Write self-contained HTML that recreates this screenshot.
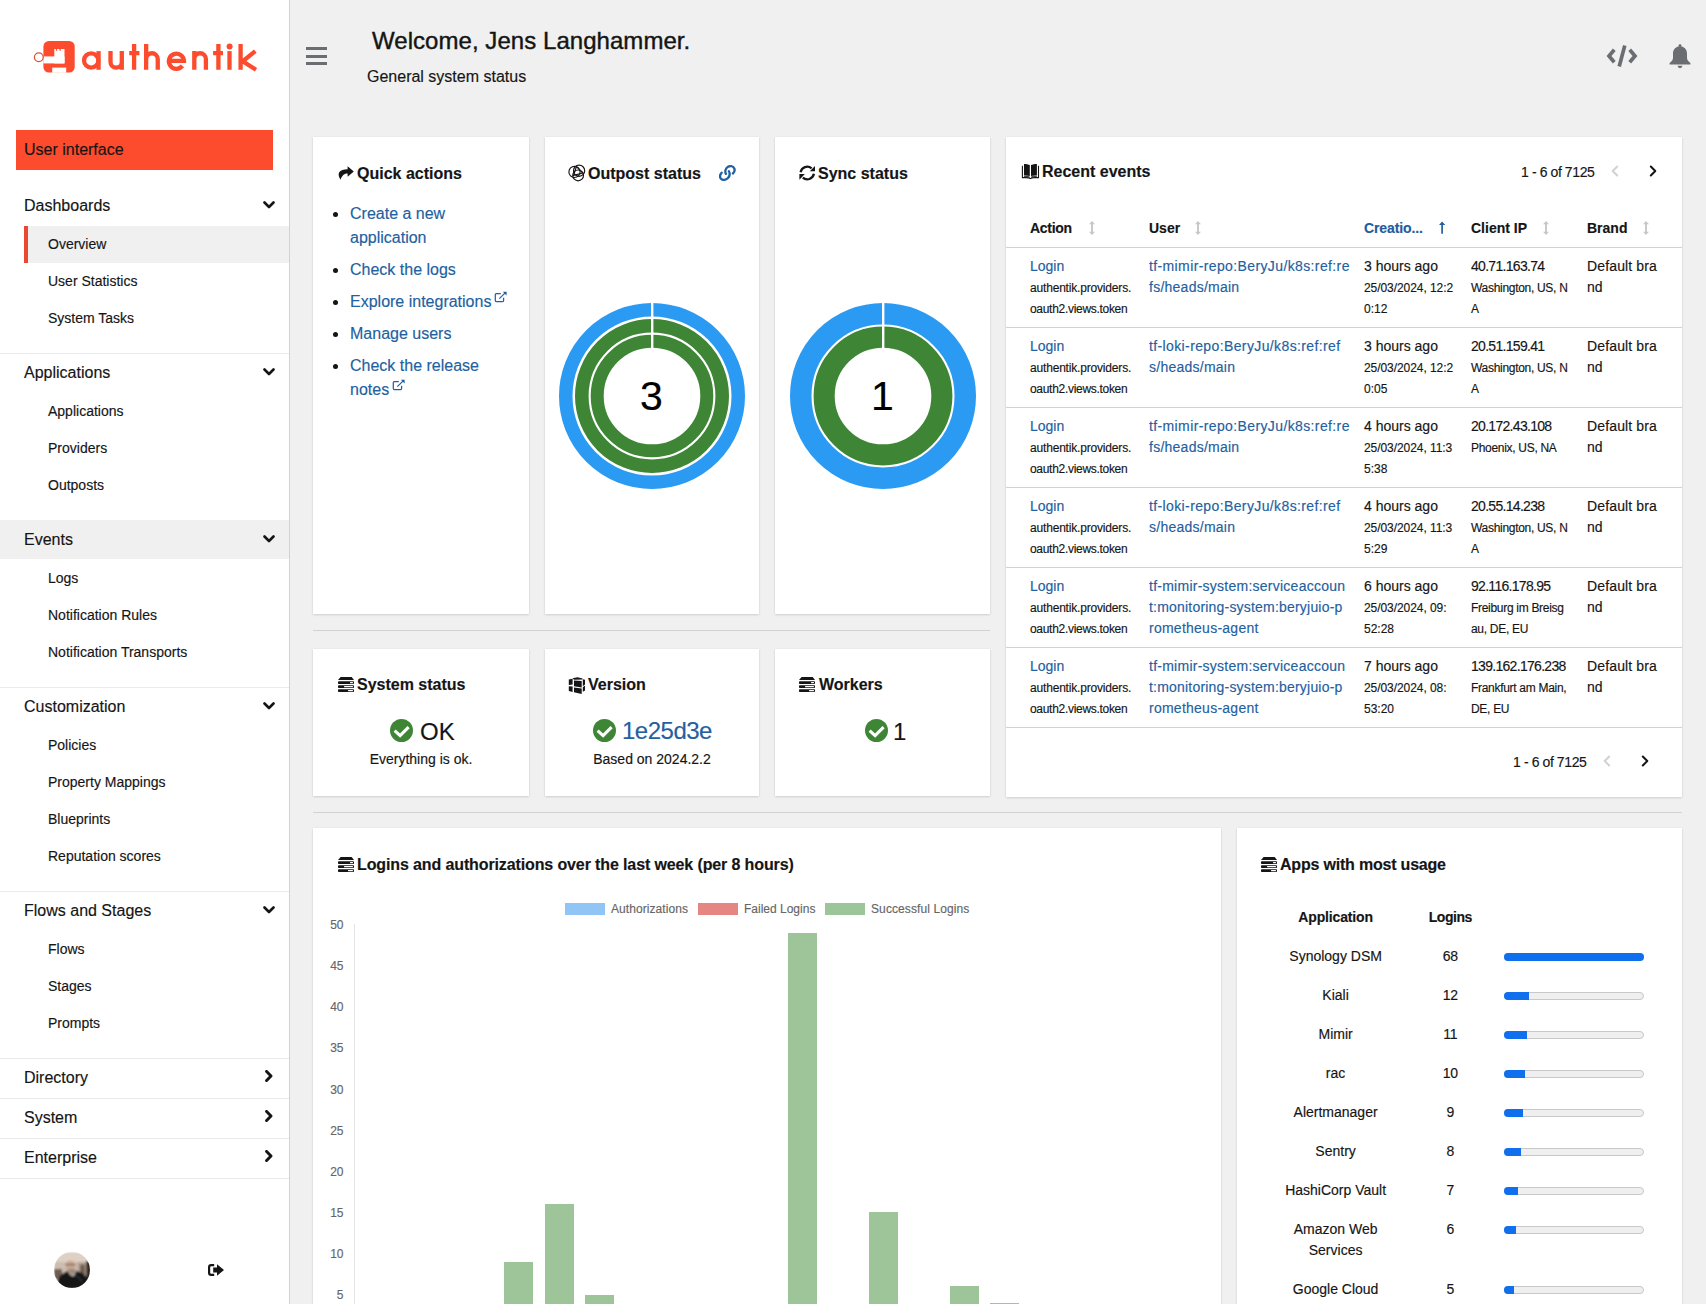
<!DOCTYPE html>
<html><head><meta charset="utf-8"><title>authentik</title>
<style>
html,body{margin:0;padding:0;}
body{width:1706px;height:1304px;overflow:hidden;position:relative;background:#f0f0f0;font-family:"Liberation Sans",sans-serif;}
.t{position:absolute;white-space:nowrap;line-height:1;-webkit-text-stroke:0.15px currentColor;}
.card{position:absolute;background:#fff;box-shadow:0 1px 2px 0 rgba(3,3,3,.12),0 0 2px 0 rgba(3,3,3,.06);}
</style></head><body>

<div style="position:absolute;left:0px;top:0px;width:289px;height:1304px;background:#fff"></div>
<div style="position:absolute;left:289px;top:0px;width:1px;height:1304px;background:#d2d2d2"></div>
<svg style="position:absolute;left:30px;top:36px" width="232" height="42" viewBox="0 0 232 42">
<rect x="13.4" y="4.9" width="31.3" height="31.7" rx="5.5" fill="#fd4b2d"/>
<g fill="#fff">
<rect x="24.3" y="13" width="10.2" height="14.4"/>
<rect x="13.4" y="20.4" width="21.1" height="7"/>
<rect x="22.2" y="31.6" width="14" height="5.2"/>
</g>
<g fill="#fd4b2d"><rect x="25.9" y="12.5" width="1.2" height="2.2"/><rect x="29.4" y="12.5" width="1.4" height="2.2"/></g>
<circle cx="8.8" cy="21.3" r="4.4" fill="#fff" stroke="#e0503a" stroke-width="1.3"/>
<g fill="none" stroke="#fd4b2d" stroke-width="4.3">
<circle cx="61.2" cy="24.45" r="7.15"/>
<path d="M68.55 15.1V33.8"/>
<path d="M80.5 15.1V26a5.65 5.65 0 0 0 11.3 0V15.1M91.8 15.1V33.8"/>
<path d="M104.1 8.1V33.8M99.2 17.2h10.2"/>
<path d="M116.15 8.1V33.8M116.15 33.8V23.05a5.8 5.8 0 0 1 11.6 0V33.8"/>
<path d="M138.85 24.8H154a7.55 7.55 0 1 0 -1.6 5.1"/>
<path d="M164.3 15.1V33.8M164.3 33.8V23.05a5.8 5.8 0 0 1 11.6 0V33.8"/>
<path d="M188.4 8.1V33.8M183.1 17.2h9.9"/>
<path d="M199.5 15.1V33.8"/>
<path d="M210.6 8.1V33.8M225.3 15.1L212.7 25.3L226 33.8"/>
</g>
<circle cx="199.6" cy="10.5" r="3" fill="#fd4b2d"/>
</svg>
<div style="position:absolute;left:16px;top:130px;width:257px;height:40px;background:#fd4b2d"></div>
<div class="t" style="left:24px;top:141px;line-height:17px;font-size:16px;color:#151515;font-weight:400;">User interface</div>
<div style="position:absolute;left:24px;top:226px;width:265px;height:37px;background:#f0f0f0"></div>
<div style="position:absolute;left:24px;top:226px;width:4px;height:37px;background:#e8492f"></div>
<div style="position:absolute;left:0px;top:520px;width:289px;height:39px;background:#f0f0f0"></div>
<div style="position:absolute;left:0px;top:353px;width:289px;height:1px;background:#ebebeb"></div>
<div style="position:absolute;left:0px;top:687px;width:289px;height:1px;background:#ebebeb"></div>
<div style="position:absolute;left:0px;top:891px;width:289px;height:1px;background:#ebebeb"></div>
<div style="position:absolute;left:0px;top:1058px;width:289px;height:1px;background:#ebebeb"></div>
<div style="position:absolute;left:0px;top:1098px;width:289px;height:1px;background:#ebebeb"></div>
<div style="position:absolute;left:0px;top:1138px;width:289px;height:1px;background:#ebebeb"></div>
<div style="position:absolute;left:0px;top:1178px;width:289px;height:1px;background:#ebebeb"></div>
<div class="t" style="left:24px;top:197px;line-height:17px;font-size:16px;color:#151515;font-weight:400;">Dashboards</div>
<svg style="position:absolute;left:262.5px;top:200px" width="12" height="10" viewBox="0 0 12 10"><path d="M1.5 2.5L6 7l4.5-4.5" fill="none" stroke="#151515" stroke-width="2.6" stroke-linecap="round" stroke-linejoin="round"/></svg>
<div class="t" style="left:48px;top:236px;line-height:16px;font-size:14px;color:#151515;font-weight:400;">Overview</div>
<div class="t" style="left:48px;top:273px;line-height:16px;font-size:14px;color:#151515;font-weight:400;">User Statistics</div>
<div class="t" style="left:48px;top:310px;line-height:16px;font-size:14px;color:#151515;font-weight:400;">System Tasks</div>
<div class="t" style="left:24px;top:364px;line-height:17px;font-size:16px;color:#151515;font-weight:400;">Applications</div>
<svg style="position:absolute;left:262.5px;top:367px" width="12" height="10" viewBox="0 0 12 10"><path d="M1.5 2.5L6 7l4.5-4.5" fill="none" stroke="#151515" stroke-width="2.6" stroke-linecap="round" stroke-linejoin="round"/></svg>
<div class="t" style="left:48px;top:403px;line-height:16px;font-size:14px;color:#151515;font-weight:400;">Applications</div>
<div class="t" style="left:48px;top:440px;line-height:16px;font-size:14px;color:#151515;font-weight:400;">Providers</div>
<div class="t" style="left:48px;top:477px;line-height:16px;font-size:14px;color:#151515;font-weight:400;">Outposts</div>
<div class="t" style="left:24px;top:531px;line-height:17px;font-size:16px;color:#151515;font-weight:400;">Events</div>
<svg style="position:absolute;left:262.5px;top:534px" width="12" height="10" viewBox="0 0 12 10"><path d="M1.5 2.5L6 7l4.5-4.5" fill="none" stroke="#151515" stroke-width="2.6" stroke-linecap="round" stroke-linejoin="round"/></svg>
<div class="t" style="left:48px;top:570px;line-height:16px;font-size:14px;color:#151515;font-weight:400;">Logs</div>
<div class="t" style="left:48px;top:607px;line-height:16px;font-size:14px;color:#151515;font-weight:400;">Notification Rules</div>
<div class="t" style="left:48px;top:644px;line-height:16px;font-size:14px;color:#151515;font-weight:400;">Notification Transports</div>
<div class="t" style="left:24px;top:698px;line-height:17px;font-size:16px;color:#151515;font-weight:400;">Customization</div>
<svg style="position:absolute;left:262.5px;top:701px" width="12" height="10" viewBox="0 0 12 10"><path d="M1.5 2.5L6 7l4.5-4.5" fill="none" stroke="#151515" stroke-width="2.6" stroke-linecap="round" stroke-linejoin="round"/></svg>
<div class="t" style="left:48px;top:737px;line-height:16px;font-size:14px;color:#151515;font-weight:400;">Policies</div>
<div class="t" style="left:48px;top:774px;line-height:16px;font-size:14px;color:#151515;font-weight:400;">Property Mappings</div>
<div class="t" style="left:48px;top:811px;line-height:16px;font-size:14px;color:#151515;font-weight:400;">Blueprints</div>
<div class="t" style="left:48px;top:848px;line-height:16px;font-size:14px;color:#151515;font-weight:400;">Reputation scores</div>
<div class="t" style="left:24px;top:902px;line-height:17px;font-size:16px;color:#151515;font-weight:400;">Flows and Stages</div>
<svg style="position:absolute;left:262.5px;top:905px" width="12" height="10" viewBox="0 0 12 10"><path d="M1.5 2.5L6 7l4.5-4.5" fill="none" stroke="#151515" stroke-width="2.6" stroke-linecap="round" stroke-linejoin="round"/></svg>
<div class="t" style="left:48px;top:941px;line-height:16px;font-size:14px;color:#151515;font-weight:400;">Flows</div>
<div class="t" style="left:48px;top:978px;line-height:16px;font-size:14px;color:#151515;font-weight:400;">Stages</div>
<div class="t" style="left:48px;top:1015px;line-height:16px;font-size:14px;color:#151515;font-weight:400;">Prompts</div>
<div class="t" style="left:24px;top:1069px;line-height:17px;font-size:16px;color:#151515;font-weight:400;">Directory</div>
<svg style="position:absolute;left:264px;top:1070px" width="10" height="12" viewBox="0 0 10 12"><path d="M2.6 1.4L7 6l-4.4 4.6" fill="none" stroke="#151515" stroke-width="2.9" stroke-linecap="round" stroke-linejoin="round"/></svg>
<div class="t" style="left:24px;top:1109px;line-height:17px;font-size:16px;color:#151515;font-weight:400;">System</div>
<svg style="position:absolute;left:264px;top:1110px" width="10" height="12" viewBox="0 0 10 12"><path d="M2.6 1.4L7 6l-4.4 4.6" fill="none" stroke="#151515" stroke-width="2.9" stroke-linecap="round" stroke-linejoin="round"/></svg>
<div class="t" style="left:24px;top:1149px;line-height:17px;font-size:16px;color:#151515;font-weight:400;">Enterprise</div>
<svg style="position:absolute;left:264px;top:1150px" width="10" height="12" viewBox="0 0 10 12"><path d="M2.6 1.4L7 6l-4.4 4.6" fill="none" stroke="#151515" stroke-width="2.9" stroke-linecap="round" stroke-linejoin="round"/></svg>
<svg style="position:absolute;left:54px;top:1252px" width="36" height="36" viewBox="0 0 36 36">
<defs><clipPath id="av"><circle cx="18" cy="18" r="18"/></clipPath><filter id="avb" x="-10%" y="-10%" width="120%" height="120%"><feGaussianBlur stdDeviation="1.1"/></filter></defs>
<g clip-path="url(#av)"><g filter="url(#avb)">
<rect width="36" height="36" fill="#cdbdb0"/>
<rect x="0" y="0" width="36" height="10" fill="#ddd0c4"/>
<rect x="23.5" y="10" width="9" height="17" fill="#b8a698"/>
<rect x="26" y="12.5" width="5" height="13" fill="#6f5d50"/>
<rect x="32" y="9" width="5" height="20" fill="#352a23"/>
<rect x="0" y="17" width="8" height="10" fill="#6d5d52"/>
<ellipse cx="16.4" cy="13" rx="5" ry="6.4" fill="#c9a792"/>
<path d="M11.2 11.5q0-6 5.2-6.3q5.2.3 5.2 6.3q-2-3-5.2-3t-5.2 3z" fill="#e0d0c0"/>
<path d="M11.5 12.6h9.8" stroke="#4d3c30" stroke-width="1"/>
<path d="M13.5 17q3 6 6 6q1.6-2.5 2-6z" fill="#9a8a7e"/>
<path d="M2 37q0.5-11 6-15q3-2 5.5-3.2q3 5.8 6.5 5.5q1.6-3.2 2-5.5q5 1 8.5 4q4 4 5 14z" fill="#121212"/>
<path d="M22 24q3 1 6 6" stroke="#2a3a48" stroke-width="1.2" fill="none"/>
</g></g></svg>
<svg style="position:absolute;left:208px;top:1264px" width="17" height="13" viewBox="0 0 17 13"><path d="M9 0.2L16 6L9 11.8V8.4H5.2V3.6H9Z" fill="#151515"/><path d="M6.2 1.1H3.2Q1.1 1.1 1.1 3.2V8.8Q1.1 10.9 3.2 10.9H6.2" fill="none" stroke="#151515" stroke-width="2.2"/></svg>
<div style="position:absolute;left:306px;top:47px;width:21px;height:3px;background:#6a6e73"></div>
<div style="position:absolute;left:306px;top:54.5px;width:21px;height:3px;background:#6a6e73"></div>
<div style="position:absolute;left:306px;top:62px;width:21px;height:3px;background:#6a6e73"></div>
<div class="t" style="left:372px;top:27px;line-height:27px;font-size:24px;color:#151515;font-weight:400;-webkit-text-stroke:0.4px #151515;letter-spacing:0.05px">Welcome, Jens Langhammer.</div>
<div class="t" style="left:367px;top:68px;line-height:17px;font-size:16px;color:#151515;font-weight:400;">General system status</div>
<svg style="position:absolute;left:1605px;top:43px" width="34" height="26" viewBox="0 0 34 26"><g fill="none" stroke="#6a6e73" stroke-width="3.7" stroke-linecap="butt">
<path d="M9.3 6.8L4 13l5.3 6.2"/><path d="M24.7 6.8L30 13l-5.3 6.2"/><path d="M19.8 2.5L14.2 23.5"/></g></svg>
<svg style="position:absolute;left:1668px;top:43px" width="24" height="26" viewBox="0 0 24 26"><path d="M12 1.2c1 0 1.4.6 1.4 1.4v.8c3.6.7 5.6 3.4 5.6 7.2v4.4c0 1.7 1.2 3.3 3.4 5v1.4H1.6V20c2.2-1.7 3.4-3.3 3.4-5v-4.4c0-3.8 2-6.5 5.6-7.2v-.8c0-.8.4-1.4 1.4-1.4z" fill="#6a6e73"/><path d="M9.5 22.8h5q-.5 2.4-2.5 2.4t-2.5-2.4z" fill="#6a6e73"/></svg>
<div class="card" style="left:313px;top:137px;width:216px;height:477px"></div>
<div class="card" style="left:545px;top:137px;width:214px;height:477px"></div>
<div class="card" style="left:775px;top:137px;width:215px;height:477px"></div>
<div class="card" style="left:1006px;top:137px;width:676px;height:660px"></div>
<div style="position:absolute;left:313px;top:630px;width:677px;height:1px;background:#d2d2d2"></div>
<div class="card" style="left:313px;top:649px;width:216px;height:147px"></div>
<div class="card" style="left:545px;top:649px;width:214px;height:147px"></div>
<div class="card" style="left:775px;top:649px;width:215px;height:147px"></div>
<div style="position:absolute;left:313px;top:812px;width:1369px;height:1px;background:#d2d2d2"></div>
<div class="card" style="left:313px;top:828px;width:908px;height:520px"></div>
<div class="card" style="left:1237px;top:828px;width:445px;height:520px"></div>
<svg style="position:absolute;left:338px;top:165px" width="17" height="16" viewBox="0 0 17 16"><path d="M9.6 1.2L15.8 6.5L9.6 11.8V8.6C6.5 8.6 4.2 10 2.6 14.8C0.8 12 0 9.5 1.2 7.3C2.5 5 5.5 4.2 9.6 4.2Z" fill="#151515"/></svg>
<div class="t" style="left:357px;top:165px;line-height:17px;font-size:16px;color:#151515;font-weight:700;">Quick actions</div>
<div class="t" style="left:350px;top:205px;line-height:17px;font-size:16px;color:#2360a0;font-weight:400;">Create a new</div>
<div class="t" style="left:350px;top:229px;line-height:17px;font-size:16px;color:#2360a0;font-weight:400;">application</div>
<div class="t" style="left:350px;top:261px;line-height:17px;font-size:16px;color:#2360a0;font-weight:400;">Check the logs</div>
<div class="t" style="left:350px;top:293px;line-height:17px;font-size:16px;color:#2360a0;font-weight:400;">Explore integrations</div>
<div class="t" style="left:350px;top:325px;line-height:17px;font-size:16px;color:#2360a0;font-weight:400;">Manage users</div>
<div class="t" style="left:350px;top:357px;line-height:17px;font-size:16px;color:#2360a0;font-weight:400;">Check the release</div>
<div class="t" style="left:350px;top:381px;line-height:17px;font-size:16px;color:#2360a0;font-weight:400;">notes</div>
<div style="position:absolute;left:333px;top:212px;width:5px;height:5px;background:#151515;border-radius:50%"></div>
<div style="position:absolute;left:333px;top:268px;width:5px;height:5px;background:#151515;border-radius:50%"></div>
<div style="position:absolute;left:333px;top:300px;width:5px;height:5px;background:#151515;border-radius:50%"></div>
<div style="position:absolute;left:333px;top:332px;width:5px;height:5px;background:#151515;border-radius:50%"></div>
<div style="position:absolute;left:333px;top:364px;width:5px;height:5px;background:#151515;border-radius:50%"></div>
<svg style="position:absolute;left:494px;top:291px" width="14" height="13" viewBox="0 0 14 13"><g fill="none" stroke="#2360a0" stroke-width="1.25"><path d="M6.8 2.6H2.3Q1.3 2.6 1.3 3.6V9.6Q1.3 10.6 2.3 10.6H8.6Q9.6 10.6 9.6 9.6V6.8"/><path d="M5.3 7.6L11.2 1.9"/></g><path d="M8.8 0.7H12.6V4.5Z" fill="#2360a0"/></svg>
<svg style="position:absolute;left:392px;top:379px" width="14" height="13" viewBox="0 0 14 13"><g fill="none" stroke="#2360a0" stroke-width="1.25"><path d="M6.8 2.6H2.3Q1.3 2.6 1.3 3.6V9.6Q1.3 10.6 2.3 10.6H8.6Q9.6 10.6 9.6 9.6V6.8"/><path d="M5.3 7.6L11.2 1.9"/></g><path d="M8.8 0.7H12.6V4.5Z" fill="#2360a0"/></svg>
<svg style="position:absolute;left:568px;top:164px" width="18" height="18" viewBox="0 0 18 18"><g fill="none" stroke="#151515" stroke-width="1.15"><circle cx="11.1" cy="6.7" r="5.6"/><circle cx="6.5" cy="7.9" r="5.6"/><circle cx="10.1" cy="11.4" r="5.4"/>
<path d="M8.4 2.6L15 9L5.6 11.4Z"/></g></svg>
<div class="t" style="left:588px;top:165px;line-height:17px;font-size:16px;color:#151515;font-weight:700;">Outpost status</div>
<svg style="position:absolute;left:719px;top:165px" width="17" height="17" viewBox="0 0 17 17"><g fill="none" stroke="#2360a0" stroke-width="2.3" stroke-linecap="round"><path d="M6.9 8.9C5.6 6.6 6.5 3.3 9 1.8C11.5 0.4 14.3 1.2 15.3 3.5C16 5.4 15.2 7.4 13.9 8.5"/><path d="M2.6 7.7C1 9.5 0.6 12 2 13.8C3.6 15.6 6.9 15.3 9 13C10.8 11 10.9 8.1 9.9 6.3"/></g></svg>
<svg style="position:absolute;left:552px;top:296px" width="200" height="200" viewBox="0 0 200 200"><circle cx="100" cy="100" r="86.25" fill="none" stroke="#2b9af3" stroke-width="13.5"/><circle cx="100" cy="100" r="70.2" fill="none" stroke="#3e8635" stroke-width="13.600000000000001"/><circle cx="100" cy="100" r="54.8" fill="none" stroke="#3e8635" stroke-width="13.0"/><rect x="99" y="0" width="2.4" height="60" fill="#fff"/></svg>
<div class="t" style="left:351.5px;width:600px;text-align:center;top:373px;line-height:46px;font-size:41px;color:#000;font-weight:400;">3</div>
<svg style="position:absolute;left:799px;top:165px" width="17" height="17" viewBox="0 0 17 17"><g fill="none" stroke="#151515" stroke-width="2.3"><path d="M1.6 7.2A6.7 6.7 0 0 1 12.6 3.4"/><path d="M14.9 8.8A6.7 6.7 0 0 1 3.8 12.6"/></g>
<path d="M10.8 6.3H16V1z" fill="#151515"/><path d="M0.4 9H5.8L0.4 14.8z" fill="#151515"/></svg>
<div class="t" style="left:818px;top:165px;line-height:17px;font-size:16px;color:#151515;font-weight:700;">Sync status</div>
<svg style="position:absolute;left:783px;top:296px" width="200" height="200" viewBox="0 0 200 200"><circle cx="100" cy="100" r="82.25" fill="none" stroke="#2b9af3" stroke-width="21.5"/><circle cx="100" cy="100" r="58.85" fill="none" stroke="#3e8635" stroke-width="21.10000000000001"/><rect x="99" y="0" width="2.4" height="60" fill="#fff"/></svg>
<div class="t" style="left:582.5px;width:600px;text-align:center;top:373px;line-height:46px;font-size:41px;color:#000;font-weight:400;">1</div>
<svg style="position:absolute;left:338px;top:677px" width="16" height="16" viewBox="0 0 16 16"><g fill="#151515">
<path d="M2.6 0H13.7L16 3H0Z"/><rect x="0" y="4.2" width="16" height="2.9" rx=".8"/><rect x="0" y="8.2" width="16" height="2.9" rx=".8"/><rect x="0" y="12.2" width="16" height="2.9" rx=".8"/></g>
<g fill="#fff"><rect x="12" y="5.1" width="3" height="1.1" rx=".5"/><rect x="6" y="9.1" width="9" height="1.1" rx=".5"/><rect x="10" y="13.1" width="5" height="1.1" rx=".5"/></g></svg>
<div class="t" style="left:357px;top:676px;line-height:17px;font-size:16px;color:#151515;font-weight:700;">System status</div>
<svg style="position:absolute;left:389.9px;top:718.8px" width="23" height="23" viewBox="0 0 23 23"><circle cx="11.5" cy="11.5" r="11.5" fill="#3e8635"/><path d="M4.6 11.6L10.1 16.6L18.6 8.1" fill="none" stroke="#fff" stroke-width="3.1"/></svg>
<div class="t" style="left:420px;top:718px;line-height:27px;font-size:24px;color:#151515;font-weight:400;">OK</div>
<div class="t" style="left:121px;width:600px;text-align:center;top:751px;line-height:16px;font-size:14px;color:#151515;font-weight:400;">Everything is ok.</div>
<svg style="position:absolute;left:568px;top:677px" width="18" height="17" viewBox="0 0 18 17"><g fill="#151515">
<path d="M0.8 2.5L4.6 1.7V7.5L0.8 8Z"/><path d="M0.8 9.2L4.6 9.6V15L0.8 14Z"/>
<path d="M6 3.6L13.7 4.1V10.4L6 9.3Z"/><path d="M6 10.6L13.7 11.6V17L6 15.2Z"/>
<path d="M14.8 2.2L17 2.7V7.5L14.8 9.2Z"/><path d="M14.8 10.2L17 8.5V13.5L14.8 14.8Z"/>
<path d="M4.6 1.2L9.5 0.3L14.5 1.5L14.5 2.5L6 2.7Z"/></g></svg>
<div class="t" style="left:588px;top:676px;line-height:17px;font-size:16px;color:#151515;font-weight:700;">Version</div>
<svg style="position:absolute;left:593.0px;top:718.8px" width="23" height="23" viewBox="0 0 23 23"><circle cx="11.5" cy="11.5" r="11.5" fill="#3e8635"/><path d="M4.6 11.6L10.1 16.6L18.6 8.1" fill="none" stroke="#fff" stroke-width="3.1"/></svg>
<div class="t" style="left:622px;top:717px;line-height:27px;font-size:24px;color:#2360a0;font-weight:400;letter-spacing:-0.5px">1e25d3e</div>
<div class="t" style="left:352px;width:600px;text-align:center;top:751px;line-height:16px;font-size:14px;color:#151515;font-weight:400;">Based on 2024.2.2</div>
<svg style="position:absolute;left:799px;top:677px" width="16" height="16" viewBox="0 0 16 16"><g fill="#151515">
<path d="M2.6 0H13.7L16 3H0Z"/><rect x="0" y="4.2" width="16" height="2.9" rx=".8"/><rect x="0" y="8.2" width="16" height="2.9" rx=".8"/><rect x="0" y="12.2" width="16" height="2.9" rx=".8"/></g>
<g fill="#fff"><rect x="12" y="5.1" width="3" height="1.1" rx=".5"/><rect x="6" y="9.1" width="9" height="1.1" rx=".5"/><rect x="10" y="13.1" width="5" height="1.1" rx=".5"/></g></svg>
<div class="t" style="left:819px;top:676px;line-height:17px;font-size:16px;color:#151515;font-weight:700;">Workers</div>
<svg style="position:absolute;left:864.8px;top:718.8px" width="23" height="23" viewBox="0 0 23 23"><circle cx="11.5" cy="11.5" r="11.5" fill="#3e8635"/><path d="M4.6 11.6L10.1 16.6L18.6 8.1" fill="none" stroke="#fff" stroke-width="3.1"/></svg>
<div class="t" style="left:893px;top:718px;line-height:27px;font-size:24px;color:#151515;font-weight:400;">1</div>
<svg style="position:absolute;left:1021px;top:164px" width="19" height="16" viewBox="0 0 19 16"><g fill="#151515"><path d="M3 -0.5L8.8 1V12L3 11.2Z"/><path d="M10 1L15.9 -0.5V11.2L10 12Z"/></g>
<path d="M1.4 1.8V13.6H5.5Q8 13.6 9.4 14.6Q10.8 13.6 13.3 13.6H17.5V1.8" fill="none" stroke="#151515" stroke-width="1.1"/>
<path d="M3 12.2Q6.5 12 8.8 13.2M10 13.2Q12.3 12 15.9 12.2" fill="none" stroke="#151515" stroke-width="1"/></svg>
<div class="t" style="left:1042px;top:163px;line-height:17px;font-size:16px;color:#151515;font-weight:700;">Recent events</div>
<div class="t" style="left:1521px;top:164px;line-height:16px;font-size:14px;color:#151515;font-weight:400;letter-spacing:-0.4px">1 - 6 of 7125</div>
<svg style="position:absolute;left:1610px;top:165px" width="9" height="12" viewBox="0 0 9 12"><path d="M7.2 1.5L2.7 6l4.5 4.5" fill="none" stroke="#d2d2d2" stroke-width="2" stroke-linecap="round" stroke-linejoin="round"/></svg>
<svg style="position:absolute;left:1649px;top:165px" width="9" height="12" viewBox="0 0 9 12"><path d="M1.8 1.5L6.3 6l-4.5 4.5" fill="none" stroke="#151515" stroke-width="2" stroke-linecap="round" stroke-linejoin="round"/></svg>
<div class="t" style="left:1030px;top:220px;line-height:16px;font-size:14px;color:#151515;font-weight:700;letter-spacing:-0.3px">Action</div>
<svg style="position:absolute;left:1088px;top:221px" width="8" height="15" viewBox="0 0 8 15"><path d="M4 0L7 3.3H4.95V10.7H7L4 14L1 10.7H3.05V3.3H1z" fill="#c7c7c7"/></svg>
<div class="t" style="left:1149px;top:220px;line-height:16px;font-size:14px;color:#151515;font-weight:700;">User</div>
<svg style="position:absolute;left:1194px;top:221px" width="8" height="15" viewBox="0 0 8 15"><path d="M4 0L7 3.3H4.95V10.7H7L4 14L1 10.7H3.05V3.3H1z" fill="#c7c7c7"/></svg>
<div class="t" style="left:1364px;top:220px;line-height:16px;font-size:14px;color:#1f5c9e;font-weight:700;letter-spacing:-0.1px">Creatio...</div>
<svg style="position:absolute;left:1439px;top:221px" width="8" height="14" viewBox="0 0 8 14"><path d="M3.1 0.6L6.3 4.1H3.95V12.8H2.25V4.1H-0.1z" fill="#2360a0"/></svg>
<div class="t" style="left:1471px;top:220px;line-height:16px;font-size:14px;color:#151515;font-weight:700;">Client IP</div>
<svg style="position:absolute;left:1542px;top:221px" width="8" height="15" viewBox="0 0 8 15"><path d="M4 0L7 3.3H4.95V10.7H7L4 14L1 10.7H3.05V3.3H1z" fill="#c7c7c7"/></svg>
<div class="t" style="left:1587px;top:220px;line-height:16px;font-size:14px;color:#151515;font-weight:700;">Brand</div>
<svg style="position:absolute;left:1642px;top:221px" width="8" height="15" viewBox="0 0 8 15"><path d="M4 0L7 3.3H4.95V10.7H7L4 14L1 10.7H3.05V3.3H1z" fill="#c7c7c7"/></svg>
<div style="position:absolute;left:1006px;top:247px;width:676px;height:1px;background:#d2d2d2"></div>
<div class="t" style="left:1030px;top:258px;line-height:16px;font-size:14px;color:#2360a0;font-weight:400;">Login</div>
<div class="t" style="left:1030px;top:281px;line-height:14px;font-size:12px;color:#151515;font-weight:400;letter-spacing:-0.18px">authentik.providers.</div>
<div class="t" style="left:1030px;top:302px;line-height:14px;font-size:12px;color:#151515;font-weight:400;letter-spacing:-0.3px">oauth2.views.token</div>
<div class="t" style="left:1149px;top:258px;line-height:16px;font-size:14px;color:#2360a0;font-weight:400;letter-spacing:0.38px">tf-mimir-repo:BeryJu/k8s:ref:re</div>
<div class="t" style="left:1149px;top:279px;line-height:16px;font-size:14px;color:#2360a0;font-weight:400;letter-spacing:0.25px">fs/heads/main</div>
<div class="t" style="left:1364px;top:258px;line-height:16px;font-size:14px;color:#151515;font-weight:400;">3 hours ago</div>
<div class="t" style="left:1364px;top:281px;line-height:14px;font-size:12px;color:#151515;font-weight:400;letter-spacing:-0.06px">25/03/2024, 12:2</div>
<div class="t" style="left:1364px;top:302px;line-height:14px;font-size:12px;color:#151515;font-weight:400;">0:12</div>
<div class="t" style="left:1471px;top:258px;line-height:16px;font-size:14px;color:#151515;font-weight:400;letter-spacing:-0.7px">40.71.163.74</div>
<div class="t" style="left:1471px;top:281px;line-height:14px;font-size:12px;color:#151515;font-weight:400;letter-spacing:-0.3px">Washington, US, N</div>
<div class="t" style="left:1471px;top:302px;line-height:14px;font-size:12px;color:#151515;font-weight:400;letter-spacing:-0.3px">A</div>
<div class="t" style="left:1587px;top:258px;line-height:16px;font-size:14px;color:#151515;font-weight:400;letter-spacing:0.14px">Default bra</div>
<div class="t" style="left:1587px;top:279px;line-height:16px;font-size:14px;color:#151515;font-weight:400;">nd</div>
<div style="position:absolute;left:1006px;top:327px;width:676px;height:1px;background:#d2d2d2"></div>
<div class="t" style="left:1030px;top:338px;line-height:16px;font-size:14px;color:#2360a0;font-weight:400;">Login</div>
<div class="t" style="left:1030px;top:361px;line-height:14px;font-size:12px;color:#151515;font-weight:400;letter-spacing:-0.18px">authentik.providers.</div>
<div class="t" style="left:1030px;top:382px;line-height:14px;font-size:12px;color:#151515;font-weight:400;letter-spacing:-0.3px">oauth2.views.token</div>
<div class="t" style="left:1149px;top:338px;line-height:16px;font-size:14px;color:#2360a0;font-weight:400;letter-spacing:0.38px">tf-loki-repo:BeryJu/k8s:ref:ref</div>
<div class="t" style="left:1149px;top:359px;line-height:16px;font-size:14px;color:#2360a0;font-weight:400;letter-spacing:0.25px">s/heads/main</div>
<div class="t" style="left:1364px;top:338px;line-height:16px;font-size:14px;color:#151515;font-weight:400;">3 hours ago</div>
<div class="t" style="left:1364px;top:361px;line-height:14px;font-size:12px;color:#151515;font-weight:400;letter-spacing:-0.06px">25/03/2024, 12:2</div>
<div class="t" style="left:1364px;top:382px;line-height:14px;font-size:12px;color:#151515;font-weight:400;">0:05</div>
<div class="t" style="left:1471px;top:338px;line-height:16px;font-size:14px;color:#151515;font-weight:400;letter-spacing:-0.7px">20.51.159.41</div>
<div class="t" style="left:1471px;top:361px;line-height:14px;font-size:12px;color:#151515;font-weight:400;letter-spacing:-0.3px">Washington, US, N</div>
<div class="t" style="left:1471px;top:382px;line-height:14px;font-size:12px;color:#151515;font-weight:400;letter-spacing:-0.3px">A</div>
<div class="t" style="left:1587px;top:338px;line-height:16px;font-size:14px;color:#151515;font-weight:400;letter-spacing:0.14px">Default bra</div>
<div class="t" style="left:1587px;top:359px;line-height:16px;font-size:14px;color:#151515;font-weight:400;">nd</div>
<div style="position:absolute;left:1006px;top:407px;width:676px;height:1px;background:#d2d2d2"></div>
<div class="t" style="left:1030px;top:418px;line-height:16px;font-size:14px;color:#2360a0;font-weight:400;">Login</div>
<div class="t" style="left:1030px;top:441px;line-height:14px;font-size:12px;color:#151515;font-weight:400;letter-spacing:-0.18px">authentik.providers.</div>
<div class="t" style="left:1030px;top:462px;line-height:14px;font-size:12px;color:#151515;font-weight:400;letter-spacing:-0.3px">oauth2.views.token</div>
<div class="t" style="left:1149px;top:418px;line-height:16px;font-size:14px;color:#2360a0;font-weight:400;letter-spacing:0.38px">tf-mimir-repo:BeryJu/k8s:ref:re</div>
<div class="t" style="left:1149px;top:439px;line-height:16px;font-size:14px;color:#2360a0;font-weight:400;letter-spacing:0.25px">fs/heads/main</div>
<div class="t" style="left:1364px;top:418px;line-height:16px;font-size:14px;color:#151515;font-weight:400;">4 hours ago</div>
<div class="t" style="left:1364px;top:441px;line-height:14px;font-size:12px;color:#151515;font-weight:400;letter-spacing:-0.06px">25/03/2024, 11:3</div>
<div class="t" style="left:1364px;top:462px;line-height:14px;font-size:12px;color:#151515;font-weight:400;">5:38</div>
<div class="t" style="left:1471px;top:418px;line-height:16px;font-size:14px;color:#151515;font-weight:400;letter-spacing:-0.7px">20.172.43.108</div>
<div class="t" style="left:1471px;top:441px;line-height:14px;font-size:12px;color:#151515;font-weight:400;letter-spacing:-0.3px">Phoenix, US, NA</div>
<div class="t" style="left:1587px;top:418px;line-height:16px;font-size:14px;color:#151515;font-weight:400;letter-spacing:0.14px">Default bra</div>
<div class="t" style="left:1587px;top:439px;line-height:16px;font-size:14px;color:#151515;font-weight:400;">nd</div>
<div style="position:absolute;left:1006px;top:487px;width:676px;height:1px;background:#d2d2d2"></div>
<div class="t" style="left:1030px;top:498px;line-height:16px;font-size:14px;color:#2360a0;font-weight:400;">Login</div>
<div class="t" style="left:1030px;top:521px;line-height:14px;font-size:12px;color:#151515;font-weight:400;letter-spacing:-0.18px">authentik.providers.</div>
<div class="t" style="left:1030px;top:542px;line-height:14px;font-size:12px;color:#151515;font-weight:400;letter-spacing:-0.3px">oauth2.views.token</div>
<div class="t" style="left:1149px;top:498px;line-height:16px;font-size:14px;color:#2360a0;font-weight:400;letter-spacing:0.38px">tf-loki-repo:BeryJu/k8s:ref:ref</div>
<div class="t" style="left:1149px;top:519px;line-height:16px;font-size:14px;color:#2360a0;font-weight:400;letter-spacing:0.25px">s/heads/main</div>
<div class="t" style="left:1364px;top:498px;line-height:16px;font-size:14px;color:#151515;font-weight:400;">4 hours ago</div>
<div class="t" style="left:1364px;top:521px;line-height:14px;font-size:12px;color:#151515;font-weight:400;letter-spacing:-0.06px">25/03/2024, 11:3</div>
<div class="t" style="left:1364px;top:542px;line-height:14px;font-size:12px;color:#151515;font-weight:400;">5:29</div>
<div class="t" style="left:1471px;top:498px;line-height:16px;font-size:14px;color:#151515;font-weight:400;letter-spacing:-0.7px">20.55.14.238</div>
<div class="t" style="left:1471px;top:521px;line-height:14px;font-size:12px;color:#151515;font-weight:400;letter-spacing:-0.3px">Washington, US, N</div>
<div class="t" style="left:1471px;top:542px;line-height:14px;font-size:12px;color:#151515;font-weight:400;letter-spacing:-0.3px">A</div>
<div class="t" style="left:1587px;top:498px;line-height:16px;font-size:14px;color:#151515;font-weight:400;letter-spacing:0.14px">Default bra</div>
<div class="t" style="left:1587px;top:519px;line-height:16px;font-size:14px;color:#151515;font-weight:400;">nd</div>
<div style="position:absolute;left:1006px;top:567px;width:676px;height:1px;background:#d2d2d2"></div>
<div class="t" style="left:1030px;top:578px;line-height:16px;font-size:14px;color:#2360a0;font-weight:400;">Login</div>
<div class="t" style="left:1030px;top:601px;line-height:14px;font-size:12px;color:#151515;font-weight:400;letter-spacing:-0.18px">authentik.providers.</div>
<div class="t" style="left:1030px;top:622px;line-height:14px;font-size:12px;color:#151515;font-weight:400;letter-spacing:-0.3px">oauth2.views.token</div>
<div class="t" style="left:1149px;top:578px;line-height:16px;font-size:14px;color:#2360a0;font-weight:400;letter-spacing:0.25px">tf-mimir-system:serviceaccoun</div>
<div class="t" style="left:1149px;top:599px;line-height:16px;font-size:14px;color:#2360a0;font-weight:400;letter-spacing:0.2px">t:monitoring-system:beryjuio-p</div>
<div class="t" style="left:1149px;top:620px;line-height:16px;font-size:14px;color:#2360a0;font-weight:400;letter-spacing:0.25px">rometheus-agent</div>
<div class="t" style="left:1364px;top:578px;line-height:16px;font-size:14px;color:#151515;font-weight:400;">6 hours ago</div>
<div class="t" style="left:1364px;top:601px;line-height:14px;font-size:12px;color:#151515;font-weight:400;letter-spacing:-0.06px">25/03/2024, 09:</div>
<div class="t" style="left:1364px;top:622px;line-height:14px;font-size:12px;color:#151515;font-weight:400;">52:28</div>
<div class="t" style="left:1471px;top:578px;line-height:16px;font-size:14px;color:#151515;font-weight:400;letter-spacing:-0.7px">92.116.178.95</div>
<div class="t" style="left:1471px;top:601px;line-height:14px;font-size:12px;color:#151515;font-weight:400;letter-spacing:-0.3px">Freiburg im Breisg</div>
<div class="t" style="left:1471px;top:622px;line-height:14px;font-size:12px;color:#151515;font-weight:400;letter-spacing:-0.3px">au, DE, EU</div>
<div class="t" style="left:1587px;top:578px;line-height:16px;font-size:14px;color:#151515;font-weight:400;letter-spacing:0.14px">Default bra</div>
<div class="t" style="left:1587px;top:599px;line-height:16px;font-size:14px;color:#151515;font-weight:400;">nd</div>
<div style="position:absolute;left:1006px;top:647px;width:676px;height:1px;background:#d2d2d2"></div>
<div class="t" style="left:1030px;top:658px;line-height:16px;font-size:14px;color:#2360a0;font-weight:400;">Login</div>
<div class="t" style="left:1030px;top:681px;line-height:14px;font-size:12px;color:#151515;font-weight:400;letter-spacing:-0.18px">authentik.providers.</div>
<div class="t" style="left:1030px;top:702px;line-height:14px;font-size:12px;color:#151515;font-weight:400;letter-spacing:-0.3px">oauth2.views.token</div>
<div class="t" style="left:1149px;top:658px;line-height:16px;font-size:14px;color:#2360a0;font-weight:400;letter-spacing:0.25px">tf-mimir-system:serviceaccoun</div>
<div class="t" style="left:1149px;top:679px;line-height:16px;font-size:14px;color:#2360a0;font-weight:400;letter-spacing:0.2px">t:monitoring-system:beryjuio-p</div>
<div class="t" style="left:1149px;top:700px;line-height:16px;font-size:14px;color:#2360a0;font-weight:400;letter-spacing:0.25px">rometheus-agent</div>
<div class="t" style="left:1364px;top:658px;line-height:16px;font-size:14px;color:#151515;font-weight:400;">7 hours ago</div>
<div class="t" style="left:1364px;top:681px;line-height:14px;font-size:12px;color:#151515;font-weight:400;letter-spacing:-0.06px">25/03/2024, 08:</div>
<div class="t" style="left:1364px;top:702px;line-height:14px;font-size:12px;color:#151515;font-weight:400;">53:20</div>
<div class="t" style="left:1471px;top:658px;line-height:16px;font-size:14px;color:#151515;font-weight:400;letter-spacing:-0.7px">139.162.176.238</div>
<div class="t" style="left:1471px;top:681px;line-height:14px;font-size:12px;color:#151515;font-weight:400;letter-spacing:-0.3px">Frankfurt am Main,</div>
<div class="t" style="left:1471px;top:702px;line-height:14px;font-size:12px;color:#151515;font-weight:400;letter-spacing:-0.3px">DE, EU</div>
<div class="t" style="left:1587px;top:658px;line-height:16px;font-size:14px;color:#151515;font-weight:400;letter-spacing:0.14px">Default bra</div>
<div class="t" style="left:1587px;top:679px;line-height:16px;font-size:14px;color:#151515;font-weight:400;">nd</div>
<div style="position:absolute;left:1006px;top:727px;width:676px;height:1px;background:#d2d2d2"></div>
<div class="t" style="left:1513px;top:754px;line-height:16px;font-size:14px;color:#151515;font-weight:400;letter-spacing:-0.4px">1 - 6 of 7125</div>
<svg style="position:absolute;left:1602px;top:755px" width="9" height="12" viewBox="0 0 9 12"><path d="M7.2 1.5L2.7 6l4.5 4.5" fill="none" stroke="#d2d2d2" stroke-width="2" stroke-linecap="round" stroke-linejoin="round"/></svg>
<svg style="position:absolute;left:1641px;top:755px" width="9" height="12" viewBox="0 0 9 12"><path d="M1.8 1.5L6.3 6l-4.5 4.5" fill="none" stroke="#151515" stroke-width="2" stroke-linecap="round" stroke-linejoin="round"/></svg>
<svg style="position:absolute;left:338px;top:857px" width="16" height="16" viewBox="0 0 16 16"><g fill="#151515">
<path d="M2.6 0H13.7L16 3H0Z"/><rect x="0" y="4.2" width="16" height="2.9" rx=".8"/><rect x="0" y="8.2" width="16" height="2.9" rx=".8"/><rect x="0" y="12.2" width="16" height="2.9" rx=".8"/></g>
<g fill="#fff"><rect x="12" y="5.1" width="3" height="1.1" rx=".5"/><rect x="6" y="9.1" width="9" height="1.1" rx=".5"/><rect x="10" y="13.1" width="5" height="1.1" rx=".5"/></g></svg>
<div class="t" style="left:357px;top:856px;line-height:17px;font-size:16px;color:#151515;font-weight:700;letter-spacing:-0.12px">Logins and authorizations over the last week (per 8 hours)</div>
<div style="position:absolute;left:565px;top:903px;width:40px;height:11.5px;background:#90c5f6"></div>
<div class="t" style="left:611px;top:902px;line-height:14px;font-size:12px;color:#666;font-weight:400;letter-spacing:0.07px">Authorizations</div>
<div style="position:absolute;left:698px;top:903px;width:40px;height:11.5px;background:#e58683"></div>
<div class="t" style="left:744px;top:902px;line-height:14px;font-size:12px;color:#666;font-weight:400;">Failed Logins</div>
<div style="position:absolute;left:825px;top:903px;width:40px;height:11.5px;background:#9dc59a"></div>
<div class="t" style="left:871px;top:902px;line-height:14px;font-size:12px;color:#666;font-weight:400;letter-spacing:0.1px">Successful Logins</div>
<div style="position:absolute;left:354px;top:924px;width:1px;height:400px;background:#e4e4e4"></div>
<div class="t" style="left:43.5px;width:300px;text-align:right;top:918px;line-height:14px;font-size:12px;color:#666;font-weight:400;">50</div>
<div class="t" style="left:43.5px;width:300px;text-align:right;top:959px;line-height:14px;font-size:12px;color:#666;font-weight:400;">45</div>
<div class="t" style="left:43.5px;width:300px;text-align:right;top:1000px;line-height:14px;font-size:12px;color:#666;font-weight:400;">40</div>
<div class="t" style="left:43.5px;width:300px;text-align:right;top:1041px;line-height:14px;font-size:12px;color:#666;font-weight:400;">35</div>
<div class="t" style="left:43.5px;width:300px;text-align:right;top:1083px;line-height:14px;font-size:12px;color:#666;font-weight:400;">30</div>
<div class="t" style="left:43.5px;width:300px;text-align:right;top:1124px;line-height:14px;font-size:12px;color:#666;font-weight:400;">25</div>
<div class="t" style="left:43.5px;width:300px;text-align:right;top:1165px;line-height:14px;font-size:12px;color:#666;font-weight:400;">20</div>
<div class="t" style="left:43.5px;width:300px;text-align:right;top:1206px;line-height:14px;font-size:12px;color:#666;font-weight:400;">15</div>
<div class="t" style="left:43.5px;width:300px;text-align:right;top:1247px;line-height:14px;font-size:12px;color:#666;font-weight:400;">10</div>
<div class="t" style="left:43.5px;width:300px;text-align:right;top:1288px;line-height:14px;font-size:12px;color:#666;font-weight:400;">5</div>
<div style="position:absolute;left:504px;top:1262px;width:29px;height:52px;background:#9ec59a"></div>
<div style="position:absolute;left:545px;top:1204px;width:29px;height:110px;background:#9ec59a"></div>
<div style="position:absolute;left:585px;top:1295px;width:29px;height:19px;background:#9ec59a"></div>
<div style="position:absolute;left:788px;top:933px;width:29px;height:381px;background:#9ec59a"></div>
<div style="position:absolute;left:869px;top:1212px;width:29px;height:102px;background:#9ec59a"></div>
<div style="position:absolute;left:950px;top:1286px;width:29px;height:28px;background:#9ec59a"></div>
<div style="position:absolute;left:990px;top:1303px;width:29px;height:11px;background:#9ec59a"></div>
<svg style="position:absolute;left:1261px;top:857px" width="16" height="16" viewBox="0 0 16 16"><g fill="#151515">
<path d="M2.6 0H13.7L16 3H0Z"/><rect x="0" y="4.2" width="16" height="2.9" rx=".8"/><rect x="0" y="8.2" width="16" height="2.9" rx=".8"/><rect x="0" y="12.2" width="16" height="2.9" rx=".8"/></g>
<g fill="#fff"><rect x="12" y="5.1" width="3" height="1.1" rx=".5"/><rect x="6" y="9.1" width="9" height="1.1" rx=".5"/><rect x="10" y="13.1" width="5" height="1.1" rx=".5"/></g></svg>
<div class="t" style="left:1280px;top:856px;line-height:17px;font-size:16px;color:#151515;font-weight:700;letter-spacing:-0.2px">Apps with most usage</div>
<div class="t" style="left:1035.6px;width:600px;text-align:center;top:909px;line-height:16px;font-size:14px;color:#151515;font-weight:700;letter-spacing:-0.15px">Application</div>
<div class="t" style="left:1150.3px;width:600px;text-align:center;top:909px;line-height:16px;font-size:14px;color:#151515;font-weight:700;letter-spacing:-0.45px">Logins</div>
<div class="t" style="left:1035.6px;width:600px;text-align:center;top:948px;line-height:16px;font-size:14px;color:#151515;font-weight:400;">Synology DSM</div>
<div class="t" style="left:1150.3px;width:600px;text-align:center;top:948px;line-height:16px;font-size:14px;color:#151515;font-weight:400;letter-spacing:-0.3px">68</div>
<div style="position:absolute;left:1504px;top:952.5px;width:140px;height:8px;box-sizing:border-box;border:1px solid #c8c8c8;background:#efefef;border-radius:4px;"></div>
<div style="position:absolute;left:1504px;top:952.5px;width:140px;height:8px;background:#0f6fec;border-radius:4px;"></div>
<div class="t" style="left:1035.6px;width:600px;text-align:center;top:987px;line-height:16px;font-size:14px;color:#151515;font-weight:400;">Kiali</div>
<div class="t" style="left:1150.3px;width:600px;text-align:center;top:987px;line-height:16px;font-size:14px;color:#151515;font-weight:400;letter-spacing:-0.3px">12</div>
<div style="position:absolute;left:1504px;top:991.5px;width:140px;height:8px;box-sizing:border-box;border:1px solid #c8c8c8;background:#efefef;border-radius:4px;"></div>
<div style="position:absolute;left:1504px;top:991.5px;width:24.7px;height:8px;background:#0f6fec;border-radius:4px 0 0 4px;"></div>
<div class="t" style="left:1035.6px;width:600px;text-align:center;top:1026px;line-height:16px;font-size:14px;color:#151515;font-weight:400;">Mimir</div>
<div class="t" style="left:1150.3px;width:600px;text-align:center;top:1026px;line-height:16px;font-size:14px;color:#151515;font-weight:400;letter-spacing:-0.3px">11</div>
<div style="position:absolute;left:1504px;top:1030.5px;width:140px;height:8px;box-sizing:border-box;border:1px solid #c8c8c8;background:#efefef;border-radius:4px;"></div>
<div style="position:absolute;left:1504px;top:1030.5px;width:22.6px;height:8px;background:#0f6fec;border-radius:4px 0 0 4px;"></div>
<div class="t" style="left:1035.6px;width:600px;text-align:center;top:1065px;line-height:16px;font-size:14px;color:#151515;font-weight:400;">rac</div>
<div class="t" style="left:1150.3px;width:600px;text-align:center;top:1065px;line-height:16px;font-size:14px;color:#151515;font-weight:400;letter-spacing:-0.3px">10</div>
<div style="position:absolute;left:1504px;top:1069.5px;width:140px;height:8px;box-sizing:border-box;border:1px solid #c8c8c8;background:#efefef;border-radius:4px;"></div>
<div style="position:absolute;left:1504px;top:1069.5px;width:20.6px;height:8px;background:#0f6fec;border-radius:4px 0 0 4px;"></div>
<div class="t" style="left:1035.6px;width:600px;text-align:center;top:1104px;line-height:16px;font-size:14px;color:#151515;font-weight:400;">Alertmanager</div>
<div class="t" style="left:1150.3px;width:600px;text-align:center;top:1104px;line-height:16px;font-size:14px;color:#151515;font-weight:400;letter-spacing:-0.3px">9</div>
<div style="position:absolute;left:1504px;top:1108.5px;width:140px;height:8px;box-sizing:border-box;border:1px solid #c8c8c8;background:#efefef;border-radius:4px;"></div>
<div style="position:absolute;left:1504px;top:1108.5px;width:18.5px;height:8px;background:#0f6fec;border-radius:4px 0 0 4px;"></div>
<div class="t" style="left:1035.6px;width:600px;text-align:center;top:1143px;line-height:16px;font-size:14px;color:#151515;font-weight:400;">Sentry</div>
<div class="t" style="left:1150.3px;width:600px;text-align:center;top:1143px;line-height:16px;font-size:14px;color:#151515;font-weight:400;letter-spacing:-0.3px">8</div>
<div style="position:absolute;left:1504px;top:1147.5px;width:140px;height:8px;box-sizing:border-box;border:1px solid #c8c8c8;background:#efefef;border-radius:4px;"></div>
<div style="position:absolute;left:1504px;top:1147.5px;width:16.5px;height:8px;background:#0f6fec;border-radius:4px 0 0 4px;"></div>
<div class="t" style="left:1035.6px;width:600px;text-align:center;top:1182px;line-height:16px;font-size:14px;color:#151515;font-weight:400;">HashiCorp Vault</div>
<div class="t" style="left:1150.3px;width:600px;text-align:center;top:1182px;line-height:16px;font-size:14px;color:#151515;font-weight:400;letter-spacing:-0.3px">7</div>
<div style="position:absolute;left:1504px;top:1186.5px;width:140px;height:8px;box-sizing:border-box;border:1px solid #c8c8c8;background:#efefef;border-radius:4px;"></div>
<div style="position:absolute;left:1504px;top:1186.5px;width:14.4px;height:8px;background:#0f6fec;border-radius:4px 0 0 4px;"></div>
<div class="t" style="left:1035.6px;width:600px;text-align:center;top:1221px;line-height:16px;font-size:14px;color:#151515;font-weight:400;">Amazon Web</div>
<div class="t" style="left:1035.6px;width:600px;text-align:center;top:1242px;line-height:16px;font-size:14px;color:#151515;font-weight:400;">Services</div>
<div class="t" style="left:1150.3px;width:600px;text-align:center;top:1221px;line-height:16px;font-size:14px;color:#151515;font-weight:400;letter-spacing:-0.3px">6</div>
<div style="position:absolute;left:1504px;top:1225.5px;width:140px;height:8px;box-sizing:border-box;border:1px solid #c8c8c8;background:#efefef;border-radius:4px;"></div>
<div style="position:absolute;left:1504px;top:1225.5px;width:12.4px;height:8px;background:#0f6fec;border-radius:4px 0 0 4px;"></div>
<div class="t" style="left:1035.6px;width:600px;text-align:center;top:1281px;line-height:16px;font-size:14px;color:#151515;font-weight:400;">Google Cloud</div>
<div class="t" style="left:1150.3px;width:600px;text-align:center;top:1281px;line-height:16px;font-size:14px;color:#151515;font-weight:400;letter-spacing:-0.3px">5</div>
<div style="position:absolute;left:1504px;top:1285.5px;width:140px;height:8px;box-sizing:border-box;border:1px solid #c8c8c8;background:#efefef;border-radius:4px;"></div>
<div style="position:absolute;left:1504px;top:1285.5px;width:10.3px;height:8px;background:#0f6fec;border-radius:4px 0 0 4px;"></div>
</body></html>
